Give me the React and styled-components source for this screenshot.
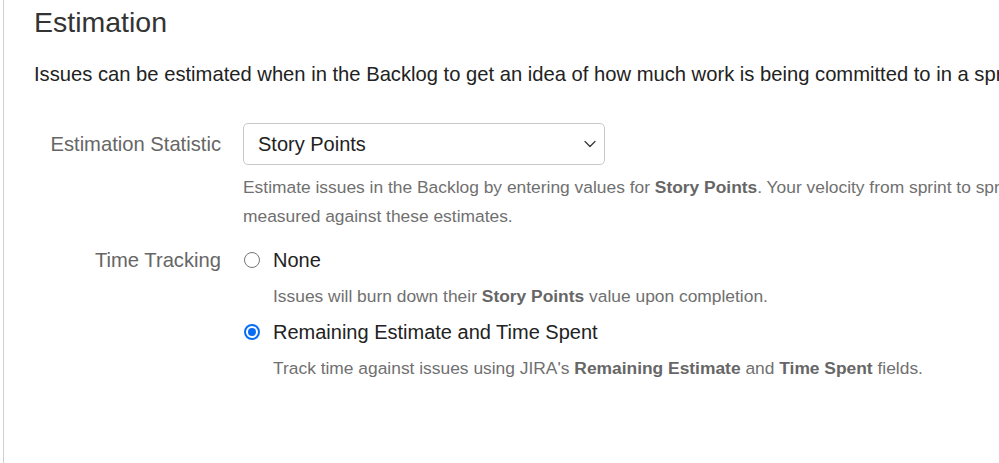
import React from "react";
import styled, { createGlobalStyle } from "styled-components";

const Global = createGlobalStyle`
  html, body { margin: 0; padding: 0; background: #fff; }
  body { font-family: "Liberation Sans", Arial, sans-serif; }
`;

const Page = styled.div`
  margin-left: 3px;
  border-left: 1px solid #d0d0d0;
  min-height: 463px;
  padding-left: 30px;
  box-sizing: border-box;
  overflow: hidden;
`;

const Heading = styled.h2`
  margin: 5px 0 0;
  font-size: 28.5px;
  line-height: 34px;
  font-weight: 400;
  color: #333;
`;

const Intro = styled.p`
  margin: 23px 0 0;
  font-size: 20.2px;
  line-height: 24px;
  color: #222;
  white-space: nowrap;
`;

const Form = styled.div`
  margin-top: 37px;
  display: grid;
  grid-template-columns: 187px 1fr;
  column-gap: 22px;
  row-gap: 17.5px;
  align-items: start;
`;

const Label = styled.div`
  text-align: right;
  font-size: 20.2px;
  line-height: ${(p) => p.$lh}px;
  color: #666;
  white-space: nowrap;
`;

const Field = styled.div`
  display: flex;
  flex-direction: column;
  min-width: 0;
`;

const Select = styled.div`
  width: 362px;
  height: 42px;
  box-sizing: border-box;
  border: 1px solid #c9c9c9;
  border-radius: 5px;
  display: flex;
  align-items: center;
  justify-content: space-between;
  padding: 0 8px 0 14px;
  font-size: 20px;
  color: #222;
  background: #fff;
`;

const Help = styled.div`
  margin-top: ${(p) => p.$mt}px;
  padding-left: ${(p) => (p.$indent ? 30 : 0)}px;
  font-size: 17.4px;
  line-height: 29px;
  color: #707070;
  white-space: nowrap;
  b { color: #666; font-weight: 700; }
`;

const Option = styled.label`
  display: flex;
  align-items: center;
  height: 24px;
  margin-top: ${(p) => p.$mt || 0}px;
  font-size: 20px;
  color: #222;
  white-space: nowrap;
`;

const Radio = styled.span`
  width: 16px;
  height: 16px;
  margin-left: 1px;
  margin-right: 13px;
  box-sizing: border-box;
  border-radius: 50%;
  flex: none;
  border: ${(p) => (p.$checked ? "2px solid #0a6cf5" : "1px solid #777")};
  display: flex;
  align-items: center;
  justify-content: center;
  &::after {
    content: "";
    width: 8px;
    height: 8px;
    border-radius: 50%;
    background: ${(p) => (p.$checked ? "#0a6cf5" : "transparent")};
  }
`;

const Chevron = () => (
  <svg width="12" height="8" viewBox="0 0 12 8" fill="none">
    <path d="M1 1.5 L6 6.5 L11 1.5" stroke="#333" strokeWidth="1.2" strokeLinecap="round" strokeLinejoin="round" />
  </svg>
);

export default function App() {
  return (
    <>
      <Global />
      <Page>
        <Heading>Estimation</Heading>
        <Intro>
          Issues can be estimated when in the Backlog to get an idea of how much work is being committed to in a sprint.
        </Intro>
        <Form>
          <Label $lh={42}>Estimation Statistic</Label>
          <Field>
            <Select>
              <span>Story Points</span>
              <Chevron />
            </Select>
            <Help $mt={7.5}>
              Estimate issues in the Backlog by entering values for <b>Story Points</b>. Your velocity from sprint to sprint will be
              <br />
              measured against these estimates.
            </Help>
          </Field>
          <Label $lh={24}>Time Tracking</Label>
          <Field>
            <Option>
              <Radio />
              None
            </Option>
            <Help $mt={9.5} $indent>
              Issues will burn down their <b>Story Points</b> value upon completion.
            </Help>
            <Option $mt={9.5}>
              <Radio $checked />
              Remaining Estimate and Time Spent
            </Option>
            <Help $mt={9.5} $indent>
              Track time against issues using JIRA's <b>Remaining Estimate</b> and <b>Time Spent</b> fields.
            </Help>
          </Field>
        </Form>
      </Page>
    </>
  );
}
